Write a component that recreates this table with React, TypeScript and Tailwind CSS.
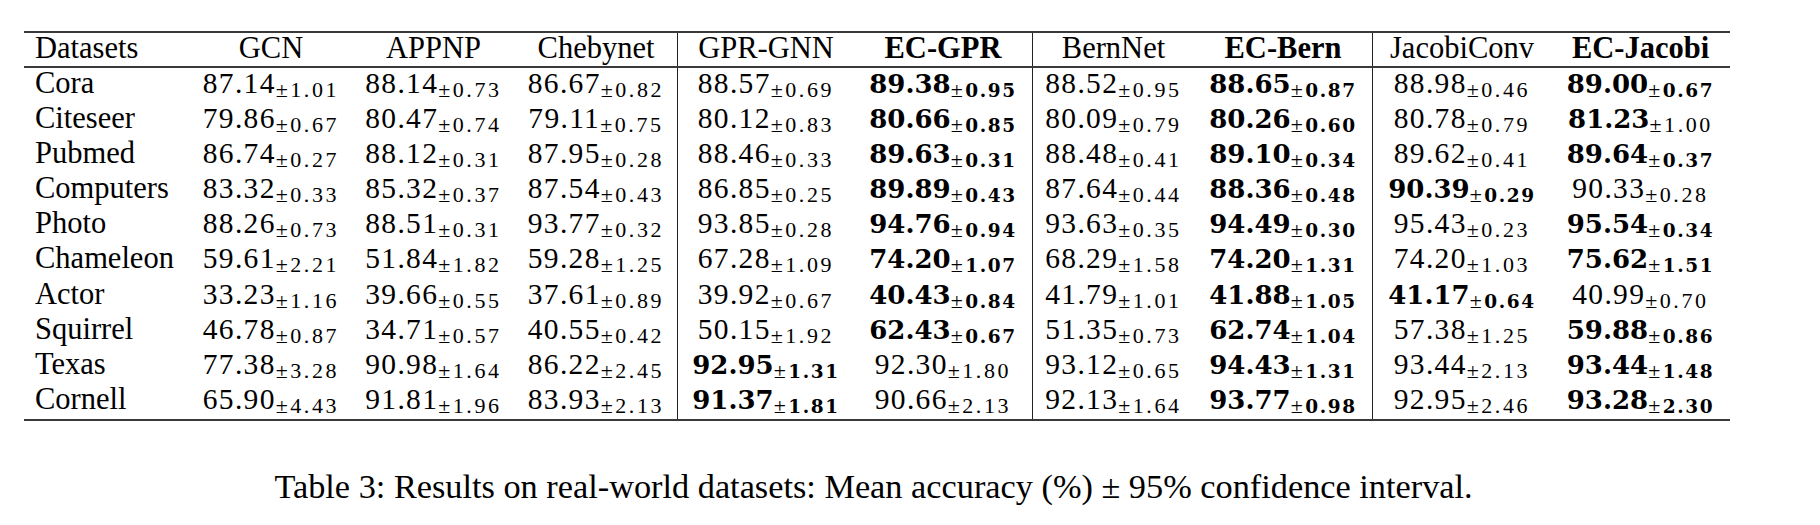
import React from "react";

type Cell = [string, string, number]; // main, sub, 0 regular | 1 bold | 2 bold main only

const headers: { t: string; b: boolean }[] = [
  { t: "Datasets", b: false },
  { t: "GCN", b: false },
  { t: "APPNP", b: false },
  { t: "Chebynet", b: false },
  { t: "GPR-GNN", b: false },
  { t: "EC-GPR", b: true },
  { t: "BernNet", b: false },
  { t: "EC-Bern", b: true },
  { t: "JacobiConv", b: false },
  { t: "EC-Jacobi", b: true },
];

const rows: { name: string; cells: Cell[] }[] = [
  { name: "Cora", cells: [["87.14", "1.01", 0], ["88.14", "0.73", 0], ["86.67", "0.82", 0], ["88.57", "0.69", 0], ["89.38", "0.95", 1], ["88.52", "0.95", 0], ["88.65", "0.87", 1], ["88.98", "0.46", 0], ["89.00", "0.67", 1]] },
  { name: "Citeseer", cells: [["79.86", "0.67", 0], ["80.47", "0.74", 0], ["79.11", "0.75", 0], ["80.12", "0.83", 0], ["80.66", "0.85", 1], ["80.09", "0.79", 0], ["80.26", "0.60", 1], ["80.78", "0.79", 0], ["81.23", "1.00", 2]] },
  { name: "Pubmed", cells: [["86.74", "0.27", 0], ["88.12", "0.31", 0], ["87.95", "0.28", 0], ["88.46", "0.33", 0], ["89.63", "0.31", 1], ["88.48", "0.41", 0], ["89.10", "0.34", 1], ["89.62", "0.41", 0], ["89.64", "0.37", 1]] },
  { name: "Computers", cells: [["83.32", "0.33", 0], ["85.32", "0.37", 0], ["87.54", "0.43", 0], ["86.85", "0.25", 0], ["89.89", "0.43", 1], ["87.64", "0.44", 0], ["88.36", "0.48", 1], ["90.39", "0.29", 1], ["90.33", "0.28", 0]] },
  { name: "Photo", cells: [["88.26", "0.73", 0], ["88.51", "0.31", 0], ["93.77", "0.32", 0], ["93.85", "0.28", 0], ["94.76", "0.94", 1], ["93.63", "0.35", 0], ["94.49", "0.30", 1], ["95.43", "0.23", 0], ["95.54", "0.34", 1]] },
  { name: "Chameleon", cells: [["59.61", "2.21", 0], ["51.84", "1.82", 0], ["59.28", "1.25", 0], ["67.28", "1.09", 0], ["74.20", "1.07", 1], ["68.29", "1.58", 0], ["74.20", "1.31", 1], ["74.20", "1.03", 0], ["75.62", "1.51", 1]] },
  { name: "Actor", cells: [["33.23", "1.16", 0], ["39.66", "0.55", 0], ["37.61", "0.89", 0], ["39.92", "0.67", 0], ["40.43", "0.84", 1], ["41.79", "1.01", 0], ["41.88", "1.05", 1], ["41.17", "0.64", 1], ["40.99", "0.70", 0]] },
  { name: "Squirrel", cells: [["46.78", "0.87", 0], ["34.71", "0.57", 0], ["40.55", "0.42", 0], ["50.15", "1.92", 0], ["62.43", "0.67", 1], ["51.35", "0.73", 0], ["62.74", "1.04", 1], ["57.38", "1.25", 0], ["59.88", "0.86", 1]] },
  { name: "Texas", cells: [["77.38", "3.28", 0], ["90.98", "1.64", 0], ["86.22", "2.45", 0], ["92.95", "1.31", 1], ["92.30", "1.80", 0], ["93.12", "0.65", 0], ["94.43", "1.31", 1], ["93.44", "2.13", 0], ["93.44", "1.48", 1]] },
  { name: "Cornell", cells: [["65.90", "4.43", 0], ["91.81", "1.96", 0], ["83.93", "2.13", 0], ["91.37", "1.81", 1], ["90.66", "2.13", 0], ["92.13", "1.64", 0], ["93.77", "0.98", 1], ["92.95", "2.46", 0], ["93.28", "2.30", 1]] },
];

const colCls = [
  "w-[166px] pl-[11px] text-left",
  "w-[162px] text-center",
  "w-[163px] text-center",
  "w-[162px] text-center",
  "w-[177px] text-center border-l border-[#222]",
  "w-[178px] text-center",
  "w-[162px] text-center border-l border-[#222]",
  "w-[178px] text-center",
  "w-[179px] text-center border-l border-[#222]",
  "w-[179px] text-center",
];

function Num({ c }: { c: Cell }) {
  const [m, s, k] = c;
  return (
    <>
      {k === 0 ? (
        <span className="text-[29.5px] tracking-[1.3px]">{m}</span>
      ) : (
        <span className="[font-family:DejaVu_Serif,serif] font-bold text-[26px]">{m}</span>
      )}
      <span className="align-[-4px] leading-none">
        <span className="text-[22px] tracking-[2.5px]">±</span>
        {k === 1 ? (
          <span className="[font-family:DejaVu_Serif,serif] font-bold text-[18.5px] tracking-[1.6px]">{s}</span>
        ) : (
          <span className="text-[22px] tracking-[2.6px]">{s}</span>
        )}
      </span>
    </>
  );
}

export default function App() {
  return (
    <div className="w-[1820px] h-[525px] bg-white text-black [font-family:Liberation_Serif,serif] overflow-hidden">
      <div className="ml-[24px] pt-[31px] w-[1706px]">
        <div className="border-t-2 border-b-2 border-[#3a3a3a] text-[30.5px]">
          <div className="flex h-[35px] leading-[31px] border-b-2 border-[#3a3a3a] whitespace-nowrap">
            {headers.map((h, i) => (
              <div key={i} className={`shrink-0 ${colCls[i]} ${h.b ? "font-bold" : ""}`}>
                {h.t}
              </div>
            ))}
          </div>
          {rows.map((r) => (
            <div key={r.name} className="flex h-[35.1px] leading-[30px] whitespace-nowrap">
              <div className={`shrink-0 ${colCls[0]}`}>{r.name}</div>
              {r.cells.map((c, j) => (
                <div key={j} className={`shrink-0 ${colCls[j + 1]}`}>
                  <Num c={c} />
                </div>
              ))}
            </div>
          ))}
        </div>
        <div className="mt-[45px] pr-[7px] text-center text-[34.3px] leading-[40px] whitespace-nowrap">
          Table 3: Results on real-world datasets: Mean accuracy (%) ± 95% confidence interval.
        </div>
      </div>
    </div>
  );
}
